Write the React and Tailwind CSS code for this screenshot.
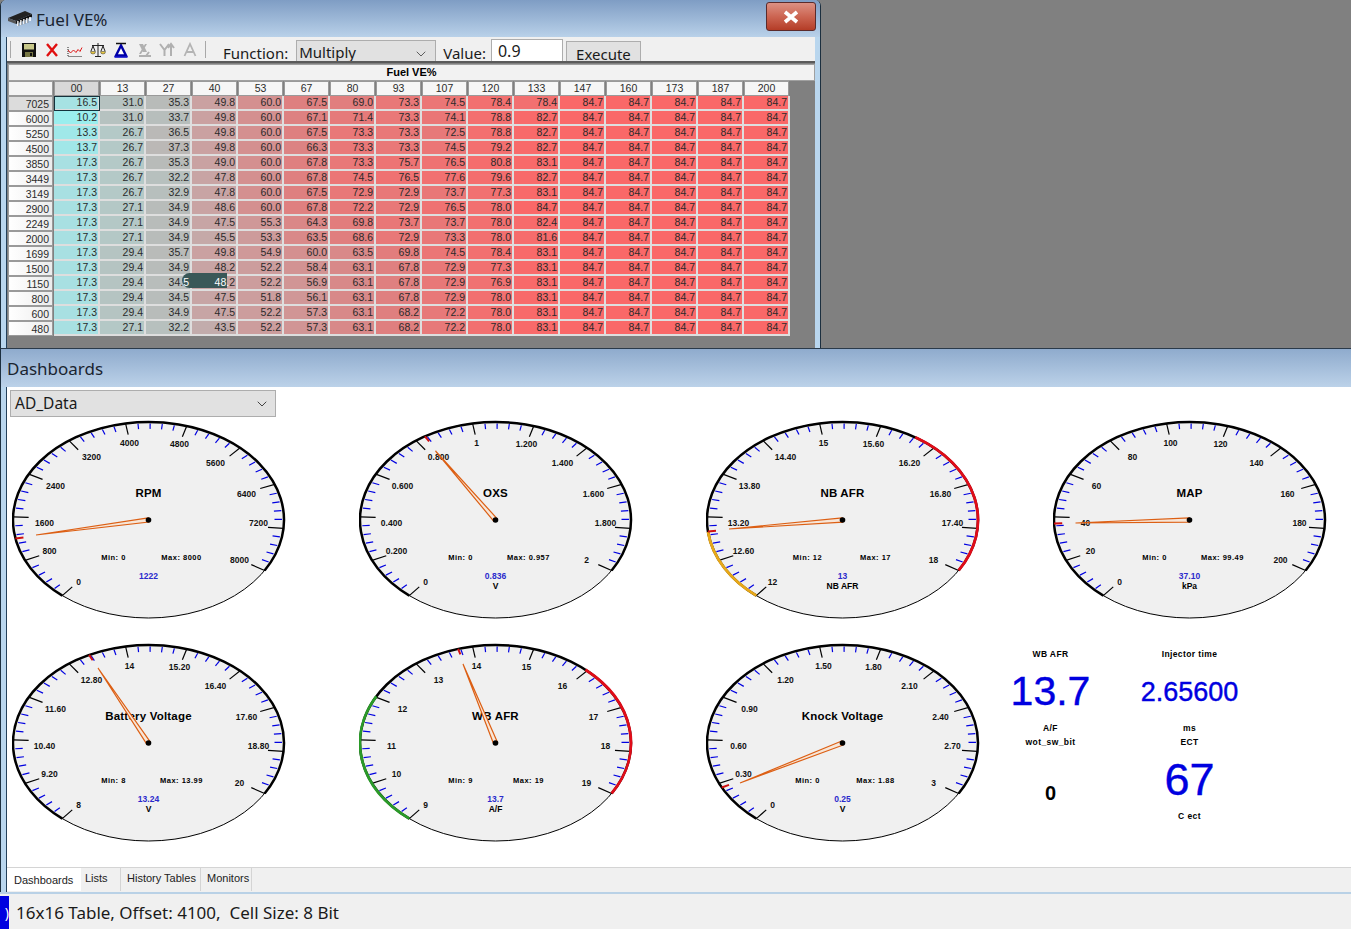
import { ChevronDown } from 'lucide-react';

const cols = ['00', '13', '27', '40', '53', '67', '80', '93', '107', '120', '133', '147', '160', '173', '187', '200'];

// only the first 11 columns vary, the rest are pegged at 84.7
const rows = [
  ['7025', 16.5, 31.0, 35.3, 49.8, 60.0, 67.5, 69.0, 73.3, 74.5, 78.4, 78.4],
  ['6000', 10.2, 31.0, 33.7, 49.8, 60.0, 67.1, 71.4, 73.3, 74.1, 78.8, 82.7],
  ['5250', 13.3, 26.7, 36.5, 49.8, 60.0, 67.5, 73.3, 73.3, 72.5, 78.8, 82.7],
  ['4500', 13.7, 26.7, 37.3, 49.8, 60.0, 66.3, 73.3, 73.3, 74.5, 79.2, 82.7],
  ['3850', 17.3, 26.7, 35.3, 49.0, 60.0, 67.8, 73.3, 75.7, 76.5, 80.8, 83.1],
  ['3449', 17.3, 26.7, 32.2, 47.8, 60.0, 67.8, 74.5, 76.5, 77.6, 79.6, 82.7],
  ['3149', 17.3, 26.7, 32.9, 47.8, 60.0, 67.5, 72.9, 72.9, 73.7, 77.3, 83.1],
  ['2900', 17.3, 27.1, 34.9, 48.6, 60.0, 67.8, 72.2, 72.9, 76.5, 78.0, 84.7],
  ['2249', 17.3, 27.1, 34.9, 47.5, 55.3, 64.3, 69.8, 73.7, 73.7, 78.0, 82.4],
  ['2000', 17.3, 27.1, 34.9, 45.5, 53.3, 63.5, 68.6, 72.9, 73.3, 78.0, 81.6],
  ['1699', 17.3, 29.4, 35.7, 49.8, 54.9, 60.0, 63.5, 69.8, 74.5, 78.4, 83.1],
  ['1500', 17.3, 29.4, 34.9, 48.2, 52.2, 58.4, 63.1, 67.8, 72.9, 77.3, 83.1],
  ['1150', 17.3, 29.4, 34.5, 48.2, 52.2, 56.9, 63.1, 67.8, 72.9, 76.9, 83.1],
  ['800', 17.3, 29.4, 34.5, 47.5, 51.8, 56.1, 63.1, 67.8, 72.9, 78.0, 83.1],
  ['600', 17.3, 29.4, 34.9, 47.5, 52.2, 57.3, 63.1, 68.2, 72.2, 78.0, 83.1],
  ['480', 17.3, 27.1, 32.2, 43.5, 52.2, 57.3, 63.1, 68.2, 72.2, 78.0, 83.1],
];

const stops = [
  [10, [154, 238, 238]],
  [17.3, [168, 224, 226]],
  [27, [180, 200, 198]],
  [35, [184, 188, 186]],
  [48, [200, 164, 164]],
  [60, [212, 144, 144]],
  [67.5, [222, 128, 128]],
  [73, [232, 120, 120]],
  [78, [242, 112, 112]],
  [84.7, [250, 104, 104]],
];

function cellColor(v) {
  for (let i = 1; i < stops.length; i++) {
    if (v <= stops[i][0]) {
      const [a, ca] = stops[i - 1];
      const [b, cb] = stops[i];
      const t = (v - a) / (b - a);
      return `rgb(${ca.map((c, k) => Math.round(c + (cb[k] - c) * t)).join(',')})`;
    }
  }
  return 'rgb(250,104,104)';
}

// scale label offsets from the gauge centre, same for every dial
const labelSpots = [[-70, 62], [-99, 31], [-104, 3], [-93, -34], [-57, -63], [-19, -77], [31, -76], [67, -57], [98, -26], [110, 3], [91, 40]];

const START = -140.5;
const STEP = 26.15;
const CX = 136.5;
const CY = 100;
const RX = 135.5;
const RY = 98;

function pt(deg, f = 1) {
  const r = (deg * Math.PI) / 180;
  return [CX + RX * f * Math.sin(r), CY - RY * f * Math.cos(r)];
}

function arc(from, to) {
  const [x1, y1] = pt(from);
  const [x2, y2] = pt(to);
  return `M${x1} ${y1}A${RX} ${RY} 0 ${to - from > 180 ? 1 : 0} 1 ${x2} ${y2}`;
}

function Gauge({ title, labels, min, max, value, unit, tip, peak, bands = [] }) {
  const end = START + STEP * 10;
  const ticks = Array.from({ length: 51 }, (_, i) => i);
  const len = Math.hypot(tip[0], tip[1]);
  const nx = (-tip[1] / len) * 2.1;
  const ny = (tip[0] / len) * 2.1;
  const font = { fontFamily: '"Liberation Sans", Arial, sans-serif', fontWeight: 700 };
  return (
    <svg width="274" height="200" viewBox="0 0 274 200" className="shrink-0" style={font}>
      <ellipse cx={CX} cy={CY} rx={RX} ry={RY} fill="#f0f0f0" stroke="#000" strokeWidth="1" />
      {ticks.map((i) => {
        const a = START + (STEP / 5) * i;
        const major = i % 5 === 0;
        const [x1, y1] = pt(a, major ? 1 : 0.985);
        const [x2, y2] = pt(a, major ? 0.885 : 0.93);
        return <line key={i} x1={x1} y1={y1} x2={x2} y2={y2} stroke={major ? '#000' : '#0000e0'} strokeWidth="1.2" />;
      })}
      <path d={arc(START, end)} fill="none" stroke="#000" strokeWidth="2.5" />
      {bands.map((b) => (
        <path key={b.color} d={arc(b.from, b.to)} fill="none" stroke={b.color} strokeWidth="2.8" />
      ))}
      {labels.map((l, i) => (
        <text key={l} x={CX + labelSpots[i][0]} y={CY + labelSpots[i][1] + 3} textAnchor="middle" fontSize="8.5" fill="#111">
          {l}
        </text>
      ))}
      <text x={CX} y={CY - 23} textAnchor="middle" fontSize="11.5" letterSpacing="0.2" fill="#000">{title}</text>
      <text x={CX - 35} y={CY + 40} textAnchor="middle" fontSize="7.5" letterSpacing="0.5" fill="#000">Min: {min}</text>
      <text x={CX + 33} y={CY + 40} textAnchor="middle" fontSize="7.5" letterSpacing="0.5" fill="#000">Max: {max}</text>
      <text x={CX} y={CY + 59} textAnchor="middle" fontSize="8.5" fill="#2a2acc">{value}</text>
      {unit && <text x={CX} y={CY + 69} textAnchor="middle" fontSize="8.5" fill="#000">{unit}</text>}
      <line x1={pt(peak)[0]} y1={pt(peak)[1]} x2={pt(peak, 0.94)[0]} y2={pt(peak, 0.94)[1]} stroke="#d01010" strokeWidth="2" />
      <polygon
        points={`${CX + nx} ${CY + ny} ${CX + tip[0]} ${CY + tip[1]} ${CX - nx} ${CY - ny}`}
        fill="#f7e6d8"
        stroke="#dc5f14"
        strokeWidth="1.2"
      />
      <circle cx={CX} cy={CY} r="2.8" fill="#000" />
    </svg>
  );
}

function TitleChip() {
  return (
    <svg width="26" height="18" viewBox="0 0 26 18" className="shrink-0">
      <polygon points="1,8 18,1 25,4 9,11" fill="#222" />
      <polygon points="1,8 9,11 9,14 1,11" fill="#555" />
      <polygon points="9,11 25,4 25,7 9,14" fill="#111" />
      <path d="M11 11v5M14 10v5M17 9v5M20 8v5M23 7v4" stroke="#fff" strokeWidth="1.6" />
      <path d="M11.8 11v5M14.8 10v5M17.8 9v5M20.8 8v5" stroke="#444" strokeWidth="0.6" />
    </svg>
  );
}

function ToolIcons() {
  return (
    <div className="flex items-center gap-[7px] ml-[10px] mt-[5px]">
      {/* save */}
      <svg width="16" height="16" viewBox="0 0 16 16">
        <rect x="1" y="1" width="14" height="14" fill="#111" />
        <rect x="3" y="2" width="10" height="5.5" fill="#c8c88a" />
        <rect x="4" y="10" width="8" height="5" fill="#777744" />
        <rect x="9" y="11" width="2" height="3" fill="#111" />
      </svg>
      {/* delete */}
      <svg width="16" height="16" viewBox="0 0 16 16">
        <path d="M3 2l10 12M13 2L3 14" stroke="#e01010" strokeWidth="2.4" />
      </svg>
      {/* curve */}
      <svg width="16" height="16" viewBox="0 0 16 16">
        <path d="M1 5v9.5h14" stroke="#222" strokeWidth="1" strokeDasharray="1 1" fill="none" />
        <path d="M1 8l2.5 3 3-3 2.5 2.5 2-3 2 2 2-4" stroke="#e01818" strokeWidth="1" fill="none" />
      </svg>
      {/* scales */}
      <svg width="16" height="16" viewBox="0 0 16 16">
        <path d="M8 1v13M5 14.5h6M2 3.5h12M3 4L1 9M3 4l2 5M13 4l-2 5M13 4l2 5" stroke="#222" strokeWidth="1" fill="none" />
        <path d="M0.5 9.5h5a2.5 2.5 0 0 1-5 0zM10.5 9.5h5a2.5 2.5 0 0 1-5 0z" fill="#e8c840" stroke="#333" strokeWidth="0.5" />
      </svg>
      {/* interpolate */}
      <svg width="16" height="16" viewBox="0 0 16 16">
        <path d="M8 3.5L3 13.5h10z" fill="#fff" stroke="#0000a8" strokeWidth="2.4" />
        <path d="M3 1.5h10" stroke="#111" strokeWidth="1.5" />
        <path d="M1.5 15h13" stroke="#0000c8" strokeWidth="1.5" />
      </svg>
      {/* disabled ones */}
      <svg width="16" height="16" viewBox="0 0 16 16">
        <path d="M3 2h4l4 8H7zM9 2h2L5 12H3z" fill="#b0b0b0" />
        <path d="M3 14h12M10 14l3-4" stroke="#b0b0b0" strokeWidth="2" />
      </svg>
      <svg width="16" height="16" viewBox="0 0 16 16">
        <path d="M1 2l4.5 6v6M10 2L5.5 8" stroke="#b0b0b0" strokeWidth="2" fill="none" />
        <path d="M12 14V3M9 6l3-4 3 4" stroke="#b0b0b0" strokeWidth="2" fill="none" />
      </svg>
      <svg width="16" height="16" viewBox="0 0 16 16">
        <path d="M2.5 14L8 2l5.5 12M4.5 10h7" stroke="#b4b4b4" strokeWidth="1.8" fill="none" />
      </svg>
    </div>
  );
}

function Readout({ title, value, unit, valueClass, children }) {
  return (
    <div className="flex flex-col items-center font-bold text-black">
      <div className="h-[15px] text-[8.5px] leading-[15px] tracking-[0.4px]">{title}</div>
      <div className={`h-[60px] flex items-center font-normal text-[#0000e0] [-webkit-text-stroke:0.4px_#0000e0] ${valueClass}`}>{value}{children}</div>
      <div className="h-[13px] text-[8.5px] leading-[13px] tracking-[0.4px]">{unit}</div>
    </div>
  );
}

const tabs = [
  { name: 'Lists', w: 'w-[40px]', pad: 'pl-[4px]' },
  { name: 'History Tables', w: 'w-[80px]', pad: 'pl-[6px]' },
  { name: 'Monitors', w: 'w-[51px]', pad: 'pl-[6px]' },
];

export default function App() {
  return (
    <div className="w-[1351px] h-[929px] overflow-hidden bg-[#808080] flex flex-col font-['Noto_Sans',sans-serif] text-[#1a1a1a]">
      {/* table editor window */}
      <div className="h-[348px] w-[821px] shrink-0 flex flex-col border-x border-[#1c2f3f] bg-[#b9d6ee] rounded-t-[6px] overflow-hidden">
        <div className="h-[37px] shrink-0 flex items-center pl-[6px] pr-[4px] bg-gradient-to-b from-[#7f9dc4] to-[#b9d1e9]">
          <TitleChip />
          <span className="ml-[3px] mt-[2px] text-[17px] leading-none text-[#1a2430]">Fuel VE%</span>
          <button className="ml-auto w-[50px] h-[29px] mt-[-4px] rounded-[3px] border border-[#5b2b2b] flex items-center justify-center bg-gradient-to-b from-[#dc9184] via-[#cc6552] to-[#b43c26]">
            <svg width="18" height="14" viewBox="0 0 18 14">
              <path d="M3 2l12 10M15 2L3 12" stroke="#fff" strokeWidth="3.6" />
            </svg>
          </button>
        </div>
        <div className="flex-1 min-h-0 mx-[5px] border-l border-[#23405a] flex flex-col">
          <div className="h-[24px] shrink-0 bg-[#f0f0f0] overflow-hidden flex items-start">
            <div className="w-px h-[17px] bg-[#a8a8a8] ml-[3px] mt-[4px] shrink-0" />
            <ToolIcons />
            <div className="w-px h-[17px] bg-[#a8a8a8] ml-[7px] mt-[4px] shrink-0" />
            <span className="ml-[17px] mt-[5px] text-[15px] leading-[22px] whitespace-nowrap">Function:</span>
            <div className="ml-[8px] mt-[3px] w-[140px] h-[30px] bg-[#e1e1e1] border border-[#adadad] flex justify-between pl-[2px] pr-[6px] text-[15px] leading-[22px]">
              <span>Multiply</span>
              <ChevronDown size={16} strokeWidth={1} className="mt-[5px]" />
            </div>
            <span className="ml-[7px] mt-[5px] text-[15px] leading-[22px] whitespace-nowrap">Value:</span>
            <div className="ml-[5px] mt-[2px] w-[72px] h-[30px] bg-white border border-[#adadad] pl-[6px] text-[16px] leading-[22px]">0.9</div>
            <div className="ml-[3px] mt-[4px] w-[75px] h-[30px] bg-[#e1e1e1] border border-[#adadad] text-center text-[15px] leading-[22px] pt-[1px]">Execute</div>
          </div>
          <div className="flex-1 min-h-0 bg-[#808080] border-t-2 border-[#5a5a5a]">
            <div className="h-[17px] ml-px mt-px bg-[#f2f2f2] border border-[#a0a0a0] text-center text-[11px] font-bold leading-[15px] text-black font-['Liberation_Sans',sans-serif]">
              Fuel VE%
            </div>
            <div className="relative ml-px grid grid-cols-[repeat(17,46px)] auto-rows-[15px] font-['Liberation_Sans',sans-serif] text-[10.5px] text-[#2b2b2b]">
              <div className="absolute left-[174px] top-[192px] w-[45px] h-[15px] rounded-l-full rounded-tr-lg bg-[#3a5858] z-[5]" />
              <div className="border border-[#9a9a9a] bg-[#f4f4f4] mr-px" />
              {cols.map((c, i) => (
                <div
                  key={c}
                  className={`border border-[#9a9a9a] mr-px text-center leading-[13px] ${i === 0 ? 'bg-[#d8d8d8]' : 'bg-[#f6f6f6]'}`}
                >
                  {c}
                </div>
              ))}
              {rows.map(([rpm, ...vals], r) => (
                <div key={rpm} className="contents">
                  <div
                    className={`border border-[#9a9a9a] mr-px text-right pr-[3px] leading-[14px] ${r === 0 ? 'bg-[#dcdcdc]' : 'bg-gradient-to-r from-white to-[#ececec]'}`}
                  >
                    {rpm}
                  </div>
                  {cols.map((c, k) => {
                    const v = vals[k] ?? 84.7;
                    const text = v.toFixed(1);
                    const picked = rpm === '1150' && k === 3;
                    const half = rpm === '1150' && k === 2;
                    return (
                      <div
                        key={c}
                        className={`border-r-2 border-b-2 border-[#dedede] text-right pr-[1px] leading-[13px] ${r === 0 && k === 0 ? 'outline outline-1 -outline-offset-1 outline-[#14323c]' : ''}`}
                        style={{ backgroundColor: cellColor(v) }}
                      >
                        {half && <span className="relative z-10">34.<span className="text-white">5</span></span>}
                        {picked && <span className="relative z-10"><span className="text-white">48.</span>2</span>}
                        {!half && !picked && <span className="relative z-10">{text}</span>}
                      </div>
                    );
                  })}
                </div>
              ))}
            </div>
          </div>
        </div>
      </div>

      {/* dashboards window */}
      <div className="h-[544px] shrink-0 flex flex-col bg-[#b9d6ee] border-t border-[#2a3a4a] border-l border-l-[#1c2f3f] overflow-hidden">
        <div className="h-[38px] shrink-0 flex items-center pl-[6px] bg-gradient-to-b from-[#8fabcd] to-[#bcd2e9]">
          <span className="text-[17px] leading-none text-[#1a2430]">Dashboards</span>
        </div>
        <div className="flex-1 min-h-0 ml-[5px] border-l border-[#23405a] flex flex-col bg-white">
          <div className="flex-1 min-h-0 overflow-hidden">
            <div className="ml-[3px] mt-[3px] w-[266px] h-[27px] bg-[#e1e1e1] border border-[#adadad] flex items-center justify-between pl-[4px] pr-[5px] pt-[1px] text-[15.5px]">
              <span>AD_Data</span>
              <ChevronDown size={16} strokeWidth={1.2} />
            </div>
            <div className="flex gap-[73px] pl-[5px] mt-[3px]">
              <Gauge
                title="RPM"
                labels={['0', '800', '1600', '2400', '3200', '4000', '4800', '5600', '6400', '7200', '8000']}
                min="0"
                max="8000"
                value="1222"
                tip={[-112.5, 15]}
                peak={-100.9}
              />
              <Gauge
                title="OXS"
                labels={['0', '0.200', '0.400', '0.600', '0.800', '1', '1.200', '1.400', '1.600', '1.800', '2']}
                min="0"
                max="0.957"
                value="0.836"
                unit="V"
                tip={[-60, -69]}
                peak={-31.4}
              />
              <Gauge
                title="NB AFR"
                labels={['12', '12.60', '13.20', '13.80', '14.40', '15', '15.60', '16.20', '16.80', '17.40', '18']}
                min="12"
                max="17"
                value="13"
                unit="NB AFR"
                tip={[-113.5, 9]}
                peak={-96.7}
                bands={[
                  { from: -140.5, to: -97, color: '#e8a818' },
                  { from: 32.5, to: 121, color: '#e00c18' },
                ]}
              />
              <Gauge
                title="MAP"
                labels={['0', '20', '40', '60', '80', '100', '120', '140', '160', '180', '200']}
                min="0"
                max="99.49"
                value="37.10"
                unit="kPa"
                tip={[-114, 3]}
                peak={-92}
              />
            </div>
            <div className="flex pl-[5px] mt-[23px]">
              <div className="flex gap-[73px]">
                <Gauge
                  title="Battery Voltage"
                  labels={['8', '9.20', '10.40', '11.60', '12.80', '14', '15.20', '16.40', '17.60', '18.80', '20']}
                  min="8"
                  max="13.99"
                  value="13.24"
                  unit="V"
                  tip={[-50.5, -75]}
                  peak={-26}
                />
                <Gauge
                  title="WB AFR"
                  labels={['9', '10', '11', '12', '13', '14', '15', '16', '17', '18', '19']}
                  min="9"
                  max="19"
                  value="13.7"
                  unit="A/F"
                  tip={[-32.5, -79]}
                  peak={-16}
                  bands={[
                    { from: -140.5, to: -61.6, color: '#2a9a28' },
                    { from: 41.6, to: 121, color: '#e00c18' },
                  ]}
                />
                <Gauge
                  title="Knock Voltage"
                  labels={['0', '0.30', '0.60', '0.90', '1.20', '1.50', '1.80', '2.10', '2.40', '2.70', '3']}
                  min="0"
                  max="1.88"
                  value="0.25"
                  unit="V"
                  tip={[-102.5, 40]}
                  peak={-117}
                />
              </div>
              <div className="ml-[1px] pt-[4px] grid grid-cols-[139px_139px] content-start font-['Liberation_Sans',sans-serif]">
                <Readout title="WB AFR" value="13.7" unit="A/F" valueClass="text-[41px]" />
                <Readout title="Injector time" value="2.65600" unit="ms" valueClass="text-[27px]" />
                <Readout title="wot_sw_bit" unit="" valueClass="pt-[26px]">
                  <span className="text-[20px] font-bold text-black [-webkit-text-stroke:0]">0</span>
                </Readout>
                <Readout title="ECT" value="67" unit="C ect" valueClass="text-[45px]" />
              </div>
            </div>
          </div>
          <div className="h-[24px] shrink-0 border-t border-[#d4d4d4] bg-[#f0f0f0] flex font-['Liberation_Sans',sans-serif] text-[11px] text-[#222]">
            <div className="w-[74px] bg-white pl-[7px] pt-[5px] leading-[14px]">Dashboards</div>
            {tabs.map((t) => (
              <div key={t.name} className={`${t.w} ${t.pad} border-r border-[#d4d4d4] pt-[3px] leading-[14px] whitespace-nowrap`}>
                {t.name}
              </div>
            ))}
          </div>
          <div className="h-[1px] shrink-0 bg-[#f0f0f0]" />
        </div>
      </div>

      {/* status bar */}
      <div className="flex-1 min-h-0 bg-[#f0f0f0] border-t-2 border-[#b9d1e6] flex items-end">
        <div className="w-[9px] h-[33px] bg-[#0000e0] text-white text-[14px] leading-[33px] text-right overflow-hidden shrink-0">)</div>
        <span className="ml-[7px] h-[33px] leading-[33px] text-[17px] whitespace-pre">16x16 Table, Offset: 4100,  Cell Size: 8 Bit</span>
      </div>
    </div>
  );
}
